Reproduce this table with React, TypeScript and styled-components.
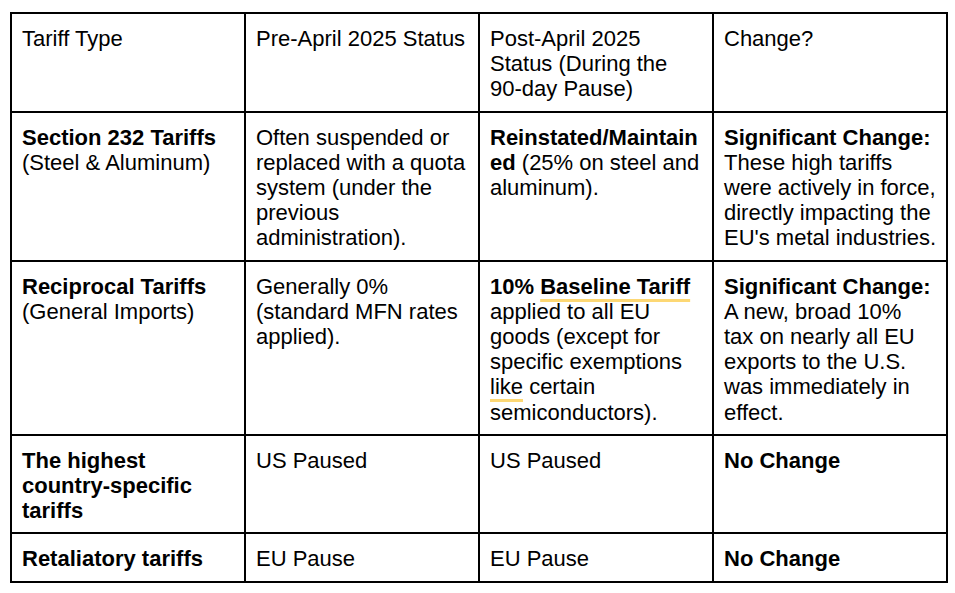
import React, { ReactElement, ReactNode } from 'react';
import styled, { createGlobalStyle } from 'styled-components';

const GlobalStyle = createGlobalStyle`
  body {
    margin: 0;
    background: #ffffff;
  }
`;

const PageStyled = styled.div`
  padding: 12px 0 0 10px;
  font-family: 'Liberation Sans', Arial, sans-serif;
  color: #000000;
`;

const TableStyled = styled.div`
  display: grid;
  grid-template-columns: repeat(4, 234px);
  width: max-content;
  border-top: 2px solid #000000;
  border-left: 2px solid #000000;
`;

const CellStyled = styled.div`
  border-right: 2px solid #000000;
  border-bottom: 2px solid #000000;
  padding: 12px 9px 9px 10px;
  font-size: 22px;
  line-height: 25.2px;
  overflow-wrap: break-word;
  word-break: break-word;
`;

const Strong = styled.b`
  font-weight: 700;
`;

// keeps hyphenated words on one line, like the source document
const NoBreak = styled.span`
  white-space: nowrap;
`;

const Marked = styled.span`
  text-decoration: underline;
  text-decoration-color: #fdd874;
  text-decoration-thickness: 3px;
  text-underline-offset: 5px;
  text-decoration-skip-ink: none;
`;

interface Row {
  cells: ReactNode[];
}

const rows: Row[] = [
  {
    cells: [
      'Tariff Type',
      <>
        <NoBreak>Pre-April</NoBreak> 2025 Status
      </>,
      <>
        <NoBreak>Post-April</NoBreak> 2025 Status (During the <NoBreak>90-day</NoBreak> Pause)
      </>,
      'Change?',
    ],
  },
  {
    cells: [
      <>
        <Strong>Section 232 Tariffs</Strong> (Steel &amp; Aluminum)
      </>,
      'Often suspended or replaced with a quota system (under the previous administration).',
      <>
        <Strong>Reinstated/Maintained</Strong> (25% on steel and aluminum).
      </>,
      <>
        <Strong>Significant Change:</Strong> These high tariffs were actively in force, directly impacting the
        EU&apos;s metal industries.
      </>,
    ],
  },
  {
    cells: [
      <>
        <Strong>Reciprocal Tariffs</Strong> (General Imports)
      </>,
      'Generally 0% (standard MFN rates applied).',
      <>
        <Strong>
          10% <Marked>Baseline Tariff</Marked>
        </Strong>{' '}
        applied to all EU goods (except for specific exemptions <Marked>like</Marked> certain semiconductors).
      </>,
      <>
        <Strong>Significant Change:</Strong> A new, broad 10%
        <br />
        tax on nearly all EU exports to the U.S. was immediately in effect.
      </>,
    ],
  },
  {
    cells: [
      <Strong>
        The highest country<NoBreak>-specific</NoBreak> tariffs
      </Strong>,
      'US Paused',
      'US Paused',
      <Strong>No Change</Strong>,
    ],
  },
  {
    cells: [<Strong>Retaliatory tariffs</Strong>, 'EU Pause', 'EU Pause', <Strong>No Change</Strong>],
  },
];

const App = (): ReactElement => (
  <PageStyled>
    <GlobalStyle />
    <TableStyled>
      {rows.map((row, r) =>
        row.cells.map((cell, c) => <CellStyled key={`${r}-${c}`}>{cell}</CellStyled>)
      )}
    </TableStyled>
  </PageStyled>
);

export default App;
